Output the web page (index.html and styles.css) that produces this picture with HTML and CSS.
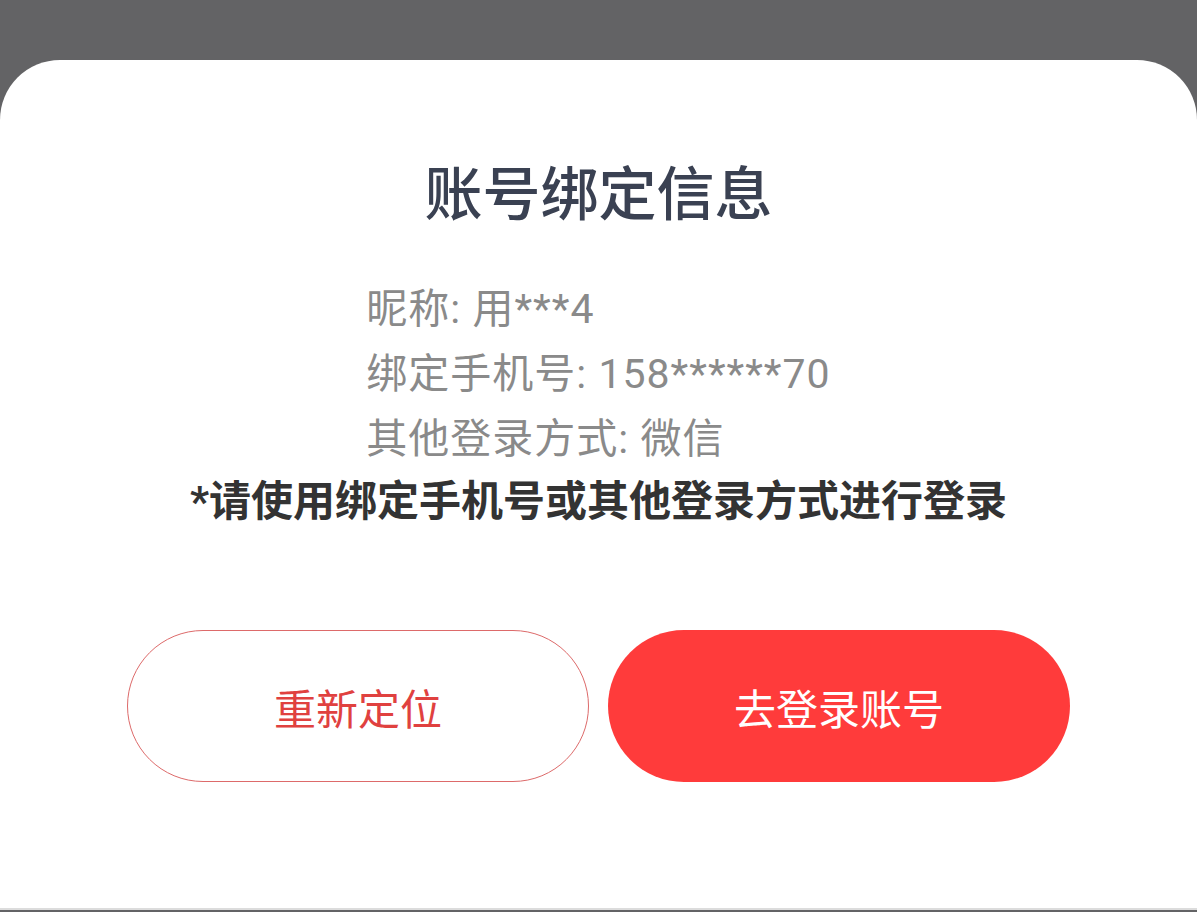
FILE: index.html
```html
<!DOCTYPE html>
<html lang="zh-CN">
<head>
    <meta charset="UTF-8">
    <meta name="viewport" content="width=device-width, initial-scale=1.0">
    <title>账号绑定信息</title>
    <link rel="stylesheet" href="styles.css">
</head>
<body>
    <div class="sheet">
        <h1 class="title">账号绑定信息</h1>

        <div class="info">
            <div class="info-line">昵称: 用***4</div>
            <div class="info-line">绑定手机号: 158******70</div>
            <div class="info-line">其他登录方式: 微信</div>
        </div>

        <p class="notice">*请使用绑定手机号或其他登录方式进行登录</p>

        <div class="actions">
            <button class="btn btn-outline">重新定位</button>
            <button class="btn btn-primary">去登录账号</button>
        </div>
    </div>
</body>
</html>
```

FILE: styles.css
```css
html, body {
    margin: 0;
    padding: 0;
}

body {
    background: #636365;
    font-family: Roboto, "Noto Sans CJK SC", sans-serif;
    height: 912px;
    overflow: hidden;
}

.sheet {
    margin-top: 60px;
    height: 850px;
    background: #fff;
    border-radius: 60px 60px 0 0;
    border-bottom: 2px solid #dcdcdc;
    padding-top: 100px;
    box-sizing: border-box;
    text-align: center;
}

.title {
    margin: 0;
    font-size: 58px;
    line-height: 70px;
    font-weight: 500;
    color: #3a4152;
}

.info {
    display: inline-block;
    text-align: left;
    margin-top: 47px;
    font-size: 41px;
    line-height: 65px;
    letter-spacing: 1px;
    color: #8a8a8a;
}

.notice {
    margin: 0;
    font-size: 42px;
    line-height: 60px;
    font-weight: 700;
    color: #333;
}

.actions {
    display: flex;
    justify-content: center;
    gap: 19px;
    margin-top: 98px;
}

.btn {
    width: 462px;
    height: 152px;
    border-radius: 76px;
    font-family: inherit;
    font-size: 42px;
    cursor: pointer;
}

.btn-outline {
    background: #fff;
    border: 1px solid #dd6a6a;
    color: #e0413f;
}

.btn-primary {
    background: #ff3b3b;
    border: none;
    color: #fff;
}
```
